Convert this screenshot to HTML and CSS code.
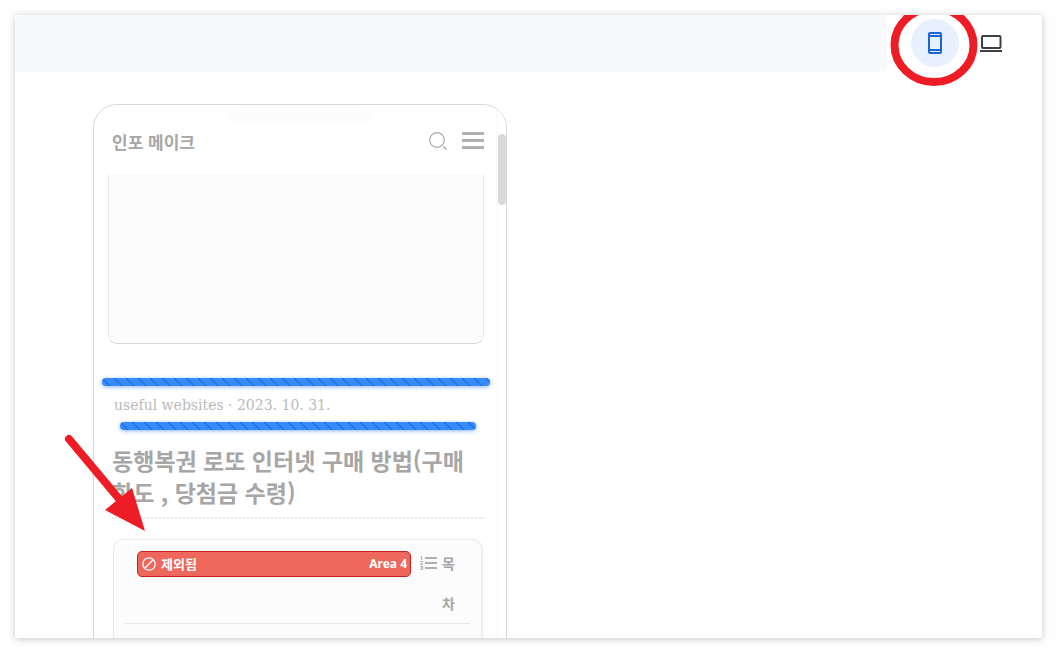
FILE: index.html
```html
<!DOCTYPE html>
<html lang="ko">
<head>
<meta charset="utf-8">
<title>인포 메이크</title>
<link rel="stylesheet" href="styles.css">
</head>
<body>
<main class="panel">
  <header class="toolbar">
    <div class="toolbar-info"></div>
    <nav class="devices">
      <button class="device device-active" type="button" aria-label="Mobile">
        <svg width="24" height="24" viewBox="0 0 24 24" fill="none" stroke="#1967d2" stroke-width="2"><rect x="6" y="2" width="12" height="20" rx="1"/><path d="M6 5h12M6 19h12" stroke-width="2"/></svg>
      </button>
      <button class="device" type="button" aria-label="Desktop">
        <svg width="24" height="24" viewBox="0 0 24 24" fill="none" stroke="#3c4043" stroke-width="2"><rect x="3" y="5" width="18.500" height="12" rx="1"/><path d="M1 20h22"/></svg>
      </button>
    </nav>
  </header>
  <section class="workspace">
    <div class="phone">
      <div class="screen">
        <div class="ghost"></div>
        <header class="site-header">
          <span class="site-name">인포 메이크</span>
          <button class="icon-button" type="button" aria-label="검색">
            <svg width="20" height="20" viewBox="0 0 20 20" fill="none" stroke="#a8a8a8"><circle cx="9" cy="9" r="7.300" stroke-width="1.200"/><path d="M15.500 15.500l3 3" stroke-width="1.500"/></svg>
          </button>
          <button class="icon-button" type="button" aria-label="메뉴">
            <svg width="22" height="18" viewBox="0 0 22 18" fill="#b0b0b0"><path d="M0 0h22v3H0zM0 7h22v3H0zM0 14h22v3H0z"/></svg>
          </button>
        </header>
        <div class="ad-space"></div>
        <div class="ad-bar"></div>
        <p class="meta">useful websites · 2023. 10. 31.</p>
        <div class="ad-bar ad-bar-inner"></div>
        <h1 class="title">동행복권 로또 인터넷 구매 방법(구매 한도 , 당첨금 수령)</h1>
        <section class="toc">
          <div class="toc-head">
            <button class="excluded" type="button">
              <svg width="14" height="14" viewBox="0 0 14 14" fill="none" stroke="#fff" stroke-width="1.300"><circle cx="7" cy="7" r="6.200"/><path d="M2.800 11.200l8.400-8.400"/></svg>
              <span>제외됨</span>
              <span class="area">Area 4</span>
            </button>
            <svg class="list-icon" width="17" height="14" viewBox="0 0 17 14" fill="none" stroke="#b0b0b0"><path d="M5 2h12M5 7h12M5 12h12" stroke-width="2"/><path d="M0.500 0.700h1.200v3.300M0.300 5.500h2.200v1.300l-2 1.700h2.300M0.300 10.500h2.200v3h-2.200M1 12h1.500" stroke-width="1"/></svg>
            <h2 class="toc-label">목차</h2>
          </div>
        </section>
      </div>
      <div class="scrollbar"><div class="thumb"></div></div>
    </div>
  </section>
  <svg class="ring" width="88" height="82" viewBox="0 0 88 82"><ellipse cx="44" cy="41" rx="39.500" ry="37" fill="none" stroke="#ee1c25" stroke-width="8"/></svg>
  <svg class="arrow" width="90" height="106" viewBox="0 0 90 106"><path d="M9 9L60 70" stroke="#ee1c25" stroke-width="8" stroke-linecap="round"/><path d="M85 101L45 80 72 58z" fill="#ee1c25"/></svg>
</main>
</body>
</html>
```
FILE: styles.css
```css
* { box-sizing: border-box; }
body {
  margin: 0;
  padding: 15px;
  height: 100vh;
  background: #fefefe;
  font-family: "Noto Sans CJK KR", "Noto Sans", sans-serif;
  color: #a6a6a6;
}
button {
  padding: 0;
  border: 0;
  background: none;
  font: inherit;
  color: inherit;
}
svg { display: block; flex: none; }
.panel {
  position: relative;
  display: flex;
  flex-direction: column;
  height: 100%;
  overflow: hidden;
  background: #fff;
  border-radius: 2px;
  box-shadow: 0 1px 7px rgba(0, 0, 0, 0.22);
}
.toolbar { display: flex; flex: none; height: 57px; }
.toolbar-info {
  flex: 1;
  background: #f8f9fb;
  border-radius: 0 6px 6px 0;
}
.devices {
  display: flex;
  gap: 8px;
  padding: 4px 27px 0 24px;
}
.device {
  display: flex;
  align-items: center;
  justify-content: center;
  width: 48px;
  height: 48px;
  border-radius: 50%;
}
.device-active { background: #e8f0fe; }
.workspace {
  flex: 1;
  min-height: 0;
  padding: 32px 78px 0;
  overflow: hidden;
}
.phone {
  display: flex;
  width: 414px;
  min-height: 700px;
  border: 1px solid #d9d9d9;
  border-radius: 24px;
  overflow: hidden;
}
.screen { position: relative; flex: 1; padding: 0 12px 0 14px; }
.ghost {
  position: absolute;
  top: 5px;
  left: 134px;
  width: 146px;
  height: 12px;
  background: #fcfcfc;
  filter: blur(3px);
}
.site-header {
  display: flex;
  align-items: center;
  gap: 14px;
  height: 69px;
  padding: 3px 0 0 4px;
}
.site-name { flex: 1; font-size: 17px; font-weight: 700; }
.ad-space {
  height: 170px;
  background: #fcfcfc;
  border: 1px solid #e8e8e8;
  border-top: 0;
  border-bottom-color: #d8d8d8;
  border-radius: 0 0 9px 9px;
}
.ad-bar {
  height: 8px;
  margin: 34px -6px 0;
  border-radius: 4px;
  background: #388bff linear-gradient(45deg, transparent 45%, #1b6fe0 47%, #1b6fe0 53%, transparent 55%) 0 0 / 12px 12px;
  box-shadow: 0 1px 4px rgba(56, 139, 255, 0.6);
}
.ad-bar-inner { margin: 0 8px 0 12px; }
.meta {
  margin: 0;
  padding: 2px 6px 0;
  font-family: "DejaVu Serif", serif;
  font-size: 14px;
  line-height: 34px;
  color: #bababa;
}
.title {
  margin: 14px 0 0 4px;
  padding-bottom: 9px;
  border-bottom: 2px dotted #e8e8e8;
  font-size: 23px;
  font-weight: 700;
  line-height: 32px;
}
.toc {
  height: 200px;
  margin: 20px 2px 0 5px;
  padding: 3px 11px;
  background: #fcfcfc;
  border: 1px solid #ebebeb;
  border-radius: 10px;
  box-shadow: 1px 1px 3px rgba(0, 0, 0, 0.08);
}
.toc-head {
  display: flex;
  align-items: flex-start;
  padding: 0 14px 0 12px;
  border-bottom: 1px solid #e5e5e5;
}
.excluded {
  display: flex;
  flex: 1;
  align-items: center;
  gap: 5px;
  height: 26px;
  margin-top: 8px;
  padding: 0 3px 0 4px;
  border: 1px solid #c5221f;
  border-radius: 5px;
  background: #ee675c;
  font-size: 13px;
  font-weight: 700;
  line-height: 24px;
  color: #fff;
}
.area { margin-left: auto; font-family: "Noto Sans", sans-serif; font-size: 12px; }
.list-icon { margin: 13px 5px 0 9px; }
.toc-label {
  width: 14px;
  margin: 0;
  font-size: 14px;
  font-weight: 700;
  line-height: 40px;
}
.scrollbar {
  width: 10px;
  padding: 29px 0 0 2px;
  background: linear-gradient(90deg, #fafafa 1px, #fff 2px);
}
.thumb { height: 71px; background: #d9d9d9; border-radius: 4px; }
.ring { position: absolute; top: -11px; right: 64px; }
.arrow { position: absolute; top: 415px; left: 45px; }
```
